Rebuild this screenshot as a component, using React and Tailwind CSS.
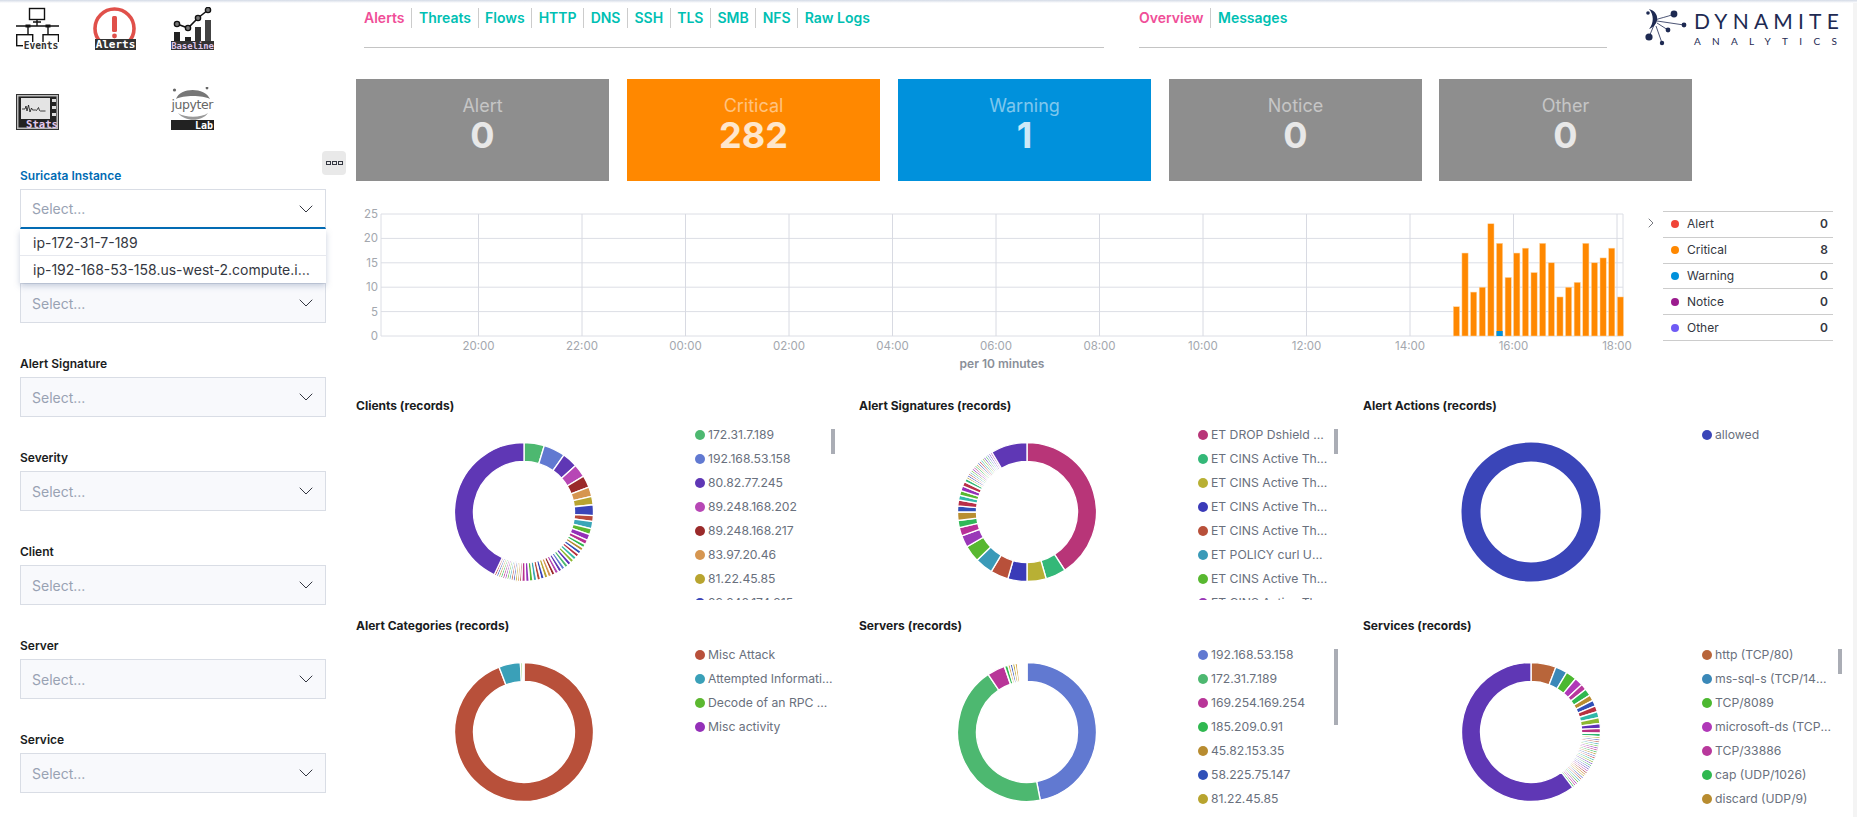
import { ChevronDown, ChevronRight } from 'lucide-react';

const palette = ['#4db870', '#6179d1', '#5f37b5', '#b747b5', '#9a2a2a', '#d69650', '#b8a42f', '#3a45b8', '#b84a3a', '#3aa6b8', '#5cb830', '#9430b8', '#b83090', '#30b850', '#b88c30', '#3050b8', '#b83040', '#30b8a8', '#8cb830', '#6030b8'];
const purple = '#5f37b5';

const run = (n, deg, from) => Array.from({ length: n }, (_, i) => [deg, palette[(from + i) % palette.length]]);

const clients = [
  [17, '#4db870'], [18, '#6179d1'], [13, '#5f37b5'], [11, '#b747b5'], [10, '#9a2a2a'], [8, '#d69650'], [7, '#b8a42f'], [9, '#3a45b8'],
  [5, '#b84a3a'], [6, '#3aa6b8'], [5, '#5cb830'], [5, '#9430b8'], [4, '#b83090'],
  ...run(20, 3.2, 13), ...run(13, 1.8, 4), [154.6, purple],
];
const signatures = [
  [147, '#b83578'], [17, '#34b878'], [16, '#b8b034'], [16, '#3a3ab8'], [15, '#b8503a'], [15, '#3a9ab8'], [14, '#58b830'], [10, '#9a38b8'],
  [7, '#b83098'], [6, '#30b858'], [7, '#b88e30'], [5, '#3050b8'], [5, '#b83048'], [4, '#30b8a8'], [4, '#58b830'], [4, '#9430b8'], [4, '#b83048'], [3, '#30b878'],
  ...run(18, 1.7, 6), [30.4, purple],
];
const actions = [[360, '#3a45b8']];
const categories = [[339, '#b8503a'], [18, '#3aa0b8'], [1.6, '#5cb830'], [1.4, '#ffffff']];
const servers = [
  [169, '#6179d1'], [157, '#4db870'], [15, '#b83598'], [3, '#30b850'], [2, '#d6a850'], [2, '#3050b8'], [2, '#b8a42f'], [2, '#d6a850'], [8, '#ffffff'],
];
const services = [
  [21, '#b8653a'], [10, '#3a88b8'], [9, '#4cb830'], [7, '#b038b8'], [5, '#b8389c'], [6, '#30b850'], [5, '#b88c30'], [5, '#3050b8'], [5, '#b83040'], [5, '#30b8a8'], [5, '#8cb830'], [4, '#6030b8'], [4, '#b83080'], [3, '#30b870'],
  ...run(28, 1.75, 6), [217, purple],
];

const legends = {
  clients: [['#4db870', '172.31.7.189'], ['#6179d1', '192.168.53.158'], ['#5f37b5', '80.82.77.245'], ['#b747b5', '89.248.168.202'], ['#9a2a2a', '89.248.168.217'], ['#d69650', '83.97.20.46'], ['#b8a42f', '81.22.45.85'], ['#3a45b8', '89.248.174.215']],
  signatures: [['#b83578', 'ET DROP Dshield Block Listed Source group 1'], ['#34b878', 'ET CINS Active Threat Intelligence Poor Reputation IP group 1'], ['#b8b034', 'ET CINS Active Threat Intelligence Poor Reputation IP group 2'], ['#3a3ab8', 'ET CINS Active Threat Intelligence Poor Reputation IP group 3'], ['#b8503a', 'ET CINS Active Threat Intelligence Poor Reputation IP group 4'], ['#3a9ab8', 'ET POLICY curl User-Agent Outbound'], ['#58b830', 'ET CINS Active Threat Intelligence Poor Reputation IP group 5'], ['#9a38b8', 'ET CINS Active Threat Intelligence Poor Reputation IP group 6']],
  actions: [['#3a45b8', 'allowed']],
  categories: [['#b8503a', 'Misc Attack'], ['#3aa0b8', 'Attempted Information Leak'], ['#5cb830', 'Decode of an RPC Query'], ['#9430b8', 'Misc activity']],
  servers: [['#6179d1', '192.168.53.158'], ['#4db870', '172.31.7.189'], ['#b83598', '169.254.169.254'], ['#30b850', '185.209.0.91'], ['#b88c30', '45.82.153.35'], ['#3050b8', '58.225.75.147'], ['#b8a42f', '81.22.45.85']],
  services: [['#b8653a', 'http (TCP/80)'], ['#3a88b8', 'ms-sql-s (TCP/1433)'], ['#4cb830', 'TCP/8089'], ['#b038b8', 'microsoft-ds (TCP/445)'], ['#b8389c', 'TCP/33886'], ['#30b850', 'cap (UDP/1026)'], ['#b88c30', 'discard (UDP/9)']],
};

const panels = [
  { title: 'Clients (records)', slices: clients, legend: legends.clients, bar: 'h-[25px]' },
  { title: 'Alert Signatures (records)', slices: signatures, legend: legends.signatures, bar: 'h-[25px]' },
  { title: 'Alert Actions (records)', slices: actions, legend: legends.actions },
  { title: 'Alert Categories (records)', slices: categories, legend: legends.categories },
  { title: 'Servers (records)', slices: servers, legend: legends.servers, bar: 'h-[76px]' },
  { title: 'Services (records)', slices: services, legend: legends.services, bar: 'h-[25px]' },
];

// the second filter's label sits under the open dropdown, so it has no text
const filters = ['Suricata Instance', '', 'Alert Signature', 'Severity', 'Client', 'Server', 'Service'];
const navLeft = ['Alerts', 'Threats', 'Flows', 'HTTP', 'DNS', 'SSH', 'TLS', 'SMB', 'NFS', 'Raw Logs'];
const navRight = ['Overview', 'Messages'];
const cards = [
  ['Alert', '0', 'bg-[#8e8e8e]'],
  ['Critical', '282', 'bg-[#ff8800]'],
  ['Warning', '1', 'bg-[#0091dc]'],
  ['Notice', '0', 'bg-[#8e8e8e]'],
  ['Other', '0', 'bg-[#8e8e8e]'],
];
const severities = [['Alert', '0', 'bg-[#f04438]'], ['Critical', '8', 'bg-[#ff8800]'], ['Warning', '0', 'bg-[#0091dc]'], ['Notice', '0', 'bg-[#9b1b8e]'], ['Other', '0', 'bg-[#6f5bf5]']];
const bars = [6, 17, 9, 10, 23, 19, 12, 17, 18, 13, 19, 15, 8, 10, 11, 19, 15, 16, 18, 8];
const hours = ['20:00', '22:00', '00:00', '02:00', '04:00', '06:00', '08:00', '10:00', '12:00', '14:00', '16:00', '18:00'];

function sector(start, end) {
  const R = 69.5, r = 50.5, c = 70;
  const pt = (rad, deg) => {
    const a = (deg * Math.PI) / 180;
    return `${(c + rad * Math.sin(a)).toFixed(2)} ${(c - rad * Math.cos(a)).toFixed(2)}`;
  };
  const big = end - start > 180 ? 1 : 0;
  return `M${pt(R, start)}A${R} ${R} 0 ${big} 1 ${pt(R, end)}L${pt(r, end)}A${r} ${r} 0 ${big} 0 ${pt(r, start)}Z`;
}

function strokeFor(deg) {
  if (deg < 2.2) return 1.35;
  if (deg < 4) return 1.65;
  return 1.35;
}

function Donut({ slices }) {
  if (slices.length === 1) {
    return (
      <svg width="140" height="140" viewBox="0 0 140 140">
        <circle cx="70" cy="70" r="60" fill="none" stroke={slices[0][1]} strokeWidth="19" />
      </svg>
    );
  }
  let at = 0;
  return (
    <svg width="140" height="140" viewBox="0 0 140 140">
      {slices.map(([deg, color], i) => {
        const d = sector(at, at + deg);
        at += deg;
        return <path key={i} d={d} fill={color} stroke="#fff" strokeWidth={strokeFor(deg)} />;
      })}
    </svg>
  );
}

function Panel({ title, slices, legend, bar }) {
  return (
    <div className="h-[220px]">
      <div className="h-[25px] text-[12px] leading-[15px] font-bold text-[#1a1c21]">{title}</div>
      <div className="flex">
        <div className="w-[339px] pl-[98px] pt-[19px]">
          <Donut slices={slices} />
        </div>
        <div className="relative w-[140px] h-[177px] overflow-hidden">
          {legend.map(([color, label]) => (
            <div key={label} className="flex items-center h-6 text-[12.2px] text-[#69707d]">
              <span className="w-[10px] h-[10px] rounded-full shrink-0 mr-[3px]" style={{ backgroundColor: color }} />
              <span className={`truncate ${bar ? 'w-[117px]' : 'w-[127px]'}`}>{label}</span>
            </div>
          ))}
          {bar && <div className={`absolute right-0 top-[6px] w-1 bg-[#aaadb5] ${bar}`} />}
        </div>
      </div>
    </div>
  );
}

function Filter({ label, active, children }) {
  return (
    <div className="h-[94px] pt-[1px]">
      <div className={`h-[15px] mb-[6px] text-[12px] leading-[15px] font-semibold ${active ? 'text-[#006bb4]' : 'text-[#1a1c21]'}`}>{label}</div>
      <div className={`relative h-10 w-[306px] flex items-center justify-between pl-[11px] pr-[7px] border border-[#d9dde5] text-[14px] text-[#98a2b3] ${active ? 'bg-white border-b-2 border-b-[#006bb4]' : 'bg-[#f8f9fc]'}`}>
        <span>Select...</span>
        <ChevronDown size={24} strokeWidth={1} className="text-[#343741]" />
        {children}
      </div>
    </div>
  );
}

function Tab({ items }) {
  return (
    <div className="flex h-5 items-center text-[14px] font-semibold">
      {items.map((t, i) => (
        <span key={t} className={`h-5 leading-5 whitespace-nowrap ${i === 0 ? 'text-[#f04e98] pr-[7px]' : 'text-[#00bfb3] px-[6.5px]'} ${i < items.length - 1 ? 'border-r border-[#cccccc]' : ''}`}>{t}</span>
      ))}
    </div>
  );
}

const mono = { fontFamily: '"DejaVu Sans Mono", monospace', fontWeight: 700 };

function EventsIcon() {
  return (
    <svg width="43" height="43" viewBox="0 0 43 43" fill="none" stroke="#111" strokeWidth="1.4">
      <rect x="13.5" y="1.5" width="15" height="11" />
      <path d="M21 13v6M17 15h8M0 19h43M12 19v8M32 19v8" />
      <rect x="9.5" y="17.5" width="5" height="3" fill="#111" stroke="none" />
      <rect x="29.5" y="17.5" width="5" height="3" fill="#111" stroke="none" />
      <rect x="0.7" y="27.7" width="16" height="11" />
      <rect x="27" y="27.7" width="15.5" height="11" />
      <rect x="7" y="35" width="36" height="8" fill="#fff" stroke="none" />
      <text x="25" y="42" textAnchor="middle" fontSize="9.6" fill="#333" stroke="none" style={mono}>Events</text>
    </svg>
  );
}

function AlertsIcon() {
  return (
    <svg width="43" height="43" viewBox="0 0 43 43">
      <circle cx="21.5" cy="21.5" r="19.5" fill="none" stroke="#e0504a" strokeWidth="3.6" />
      <rect x="19" y="9" width="5" height="16" rx="1.5" fill="#e0504a" />
      <circle cx="21.5" cy="29" r="2.4" fill="#e0504a" />
      <rect x="2" y="32" width="41" height="11" fill="#333" />
      <text x="22.5" y="41" textAnchor="middle" fontSize="11" fill="#fff" style={mono}>Alerts</text>
    </svg>
  );
}

function BaselineIcon() {
  return (
    <svg width="43" height="43" viewBox="0 0 43 43">
      <rect x="3" y="25" width="6" height="18" fill="#222" />
      <rect x="14" y="30" width="6" height="13" fill="#222" />
      <rect x="24" y="20" width="6" height="23" fill="#333" />
      <rect x="34" y="13" width="6" height="30" fill="#444" />
      <path d="M6 17l11 4 10-10 10-8" fill="none" stroke="#111" strokeWidth="1.6" />
      {[[6, 17], [17, 21], [27, 11], [37, 3]].map(([x, y]) => (
        <circle key={x} cx={x} cy={y} r="2.6" fill="#777" stroke="#111" strokeWidth="1.4" />
      ))}
      <rect x="0" y="34" width="43" height="9" fill="#333" />
      <text x="21.5" y="41.5" textAnchor="middle" fontSize="8.9" fill="#dcc4ea" style={mono}>Baseline</text>
    </svg>
  );
}

function StatsIcon() {
  return (
    <svg width="43" height="36" viewBox="0 0 43 36">
      <rect width="43" height="36" fill="#333" />
      <rect x="1" y="1" width="41" height="34" fill="#bbb" />
      <rect x="2.5" y="2.5" width="38" height="31" fill="#222" />
      <rect x="5" y="4" width="29" height="21" fill="#e4e4e4" />
      <path d="M6 15h3l1-3 1 5 1.5-6 1.5 7 1.5-4 1 2h3l1 .5 2-3 1 3 1 .5h5" fill="none" stroke="#111" strokeWidth="0.8" />
      <rect x="36" y="5" width="4" height="3" fill="#ddd" />
      <rect x="36" y="12" width="4" height="3" fill="#ddd" />
      <rect x="36" y="19" width="4" height="3" fill="#ddd" />
      <text x="26" y="34" textAnchor="middle" fontSize="10.6" fill="#e3c9ee" style={mono}>Stats</text>
    </svg>
  );
}

function JupyterIcon() {
  return (
    <svg width="43" height="43" viewBox="0 0 43 43">
      <path d="M5 12C9 0 34 0 39 12C32 8 12 8 5 12Z" fill="#777" />
      <path d="M7 26C14 31 30 31 37 26C31 35 14 35 7 26Z" fill="#999" />
      <circle cx="3.5" cy="3" r="1.6" fill="#666" />
      <circle cx="36" cy="1" r="1.4" fill="#666" />
      <text x="21.5" y="22" textAnchor="middle" fontSize="12.5" fill="#666" fontFamily='"DejaVu Sans", sans-serif' textLength="42">jupyter</text>
      <rect x="0" y="33" width="43" height="10" fill="#222" />
      <text x="33" y="41.5" textAnchor="middle" fontSize="10" fill="#fff" style={mono}>Lab</text>
    </svg>
  );
}

function Logo() {
  const nodes = [[29, 6, 3.4], [39, 17, 2.4], [23, 22, 2.4], [4, 29, 3.6], [17, 35, 2.2], [3, 5, 1.8]];
  return (
    <svg width="48" height="38" viewBox="0 0 48 38" className="shrink-0">
      <path d="M4 1C15 4 15 17 4 21C9 15 9 7 4 1Z" fill="#1e2a52" />
      <path d="M10 12C15 10 22 9 29 6M12 13L39 17M12 15L23 22M9 17L4 29M11 18L17 35" fill="none" stroke="#1e2a52" strokeWidth="0.8" />
      {nodes.map(([x, y, r]) => <circle key={x} cx={x} cy={y} r={r} fill="#1e2a52" />)}
    </svg>
  );
}

function TimeChart() {
  const unit = (336 - 214) / 25;
  return (
    <svg width="1284" height="176" viewBox="356 204 1284 176" className="shrink-0">
      {[0, 5, 10, 15, 20, 25].map(v => (
        <g key={v}>
          <line x1="381" x2="1623" y1={336 - v * unit} y2={336 - v * unit} stroke="#dcdee5" strokeWidth="1" />
          <text x="378" y={340 - v * unit} textAnchor="end" fontSize="11.5" fill="#a3a7ae">{v}</text>
        </g>
      ))}
      <line x1="381" x2="381" y1="214" y2="336" stroke="#dcdee5" />
      <line x1="1623" x2="1623" y1="214" y2="336" stroke="#dcdee5" />
      {hours.map((h, i) => {
        const x = 478.5 + i * 103.5;
        return (
          <g key={h}>
            <line x1={x} x2={x} y1="214" y2="336" stroke="#d8dae2" />
            <text x={x} y="350" textAnchor="middle" fontSize="11.5" fill="#a3a7ae">{h}</text>
          </g>
        );
      })}
      {bars.map((v, i) => (
        <rect key={i} x={1453.3 + i * 8.63} y={336 - v * unit} width="6.2" height={v * unit} fill="#ff8800" stroke="#ffd7a6" strokeWidth="0.5" />
      ))}
      <rect x="1496.5" y="331" width="6.2" height="5" fill="#0091dc" />
      <text x="1002" y="368" textAnchor="middle" fontSize="12" fontWeight="600" fill="#8a8f99">per 10 minutes</text>
    </svg>
  );
}

export default function App() {
  return (
    <div className="h-[817px] overflow-hidden bg-white font-['Inter',sans-serif]">
      <div className="h-[3px] bg-gradient-to-b from-[#d3dae6] to-white" />
      <div className="flex">
        <aside className="relative w-[356px] shrink-0">
          <div className="pl-4 pt-1 grid grid-cols-[77px_78px_43px] grid-rows-[43px_43px] gap-y-[37px] items-end">
            <EventsIcon />
            <AlertsIcon />
            <BaselineIcon />
            <StatsIcon />
            <div />
            <JupyterIcon />
          </div>
          <button className="absolute left-[322px] top-[148px] w-6 h-6 rounded-sm bg-[#e9e9e9] flex items-center justify-center gap-[1px]">
            <span className="w-[5px] h-[4px] border border-[#343741]" />
            <span className="w-[5px] h-[4px] border border-[#343741]" />
            <span className="w-[5px] h-[4px] border border-[#343741]" />
          </button>
          <div className="pl-5 pt-[37px]">
            {filters.map((f, i) => (
              <Filter key={i} label={f} active={i === 0}>
                {i === 0 && (
                  <div className="absolute z-10 left-[-1px] top-[39px] w-[306px] bg-white text-[14px] text-[#343741] shadow-[0_3px_6px_rgba(100,120,160,0.35)]">
                    <div className="h-[27px] leading-[28px] px-[13px] border-b border-[#e6e8ee]">ip-172-31-7-189</div>
                    <div className="h-[27px] leading-[28px] pl-[13px] pr-[14px] truncate">ip-192-168-53-158.us-west-2.compute.internal</div>
                  </div>
                )}
              </Filter>
            ))}
          </div>
        </aside>

        <main className="flex-1 min-w-0">
          <div className="flex h-[76px]">
            <div className="w-[748px] h-[45px] pl-2 pt-[5px]">
              <div className="h-[40px] border-b border-[#c4c4c4]"><Tab items={navLeft} /></div>
            </div>
            <div className="w-[468px] ml-[35px] h-[45px] pt-[5px]">
              <div className="h-[40px] border-b border-[#c4c4c4]"><Tab items={navRight} /></div>
            </div>
            <div className="ml-[38px] mt-[5px] flex gap-[1px] text-[#1e2a52] font-['Lato',sans-serif]">
              <Logo />
              <div className="pt-[2px]">
                <div className="text-[21px] leading-[22px] tracking-[5.2px] whitespace-nowrap">DYNAMITE</div>
                <div className="text-[10px] leading-[12px] mt-[3px] tracking-[11.3px] whitespace-nowrap">ANALYTICS</div>
              </div>
            </div>
          </div>

          <div className="flex gap-[18px]">
            {cards.map(([title, value, bg]) => (
              <div key={title} className={`w-[253px] h-[102px] pt-[15px] text-center last:-ml-px ${bg}`}>
                <div className="text-[18px] leading-[23px] text-white/50">{title}</div>
                <div className="text-[36px] leading-[36px] font-bold text-white/80">{value}</div>
              </div>
            ))}
          </div>

          <div className="flex mt-[23px] h-[176px]">
            <TimeChart />
            <div className="w-[23px] pt-[11px] pl-[3px]">
              <ChevronRight size={16} strokeWidth={1} className="text-[#343741]" />
            </div>
            <div className="w-[170px] h-fit mt-[7px] border-t border-[#cccccc] text-[12px] text-[#343741]">
              {severities.map(([name, count, dot]) => (
                <div key={name} className="h-[25.8px] flex items-center pl-[8px] pr-[5px] border-b border-[#cccccc]">
                  <span className={`w-2 h-2 rounded-full mr-[8px] ${dot}`} />
                  <span className="flex-1">{name}</span>
                  <span className="font-semibold">{count}</span>
                </div>
              ))}
            </div>
          </div>

          <div className="mt-[18px] grid grid-cols-[503px_504px_490px]">
            {panels.map(p => <Panel key={p.title} {...p} />)}
          </div>
        </main>
        <div className="w-1 shrink-0 h-[814px] bg-[#f4f4f4]" />
      </div>
    </div>
  );
}
